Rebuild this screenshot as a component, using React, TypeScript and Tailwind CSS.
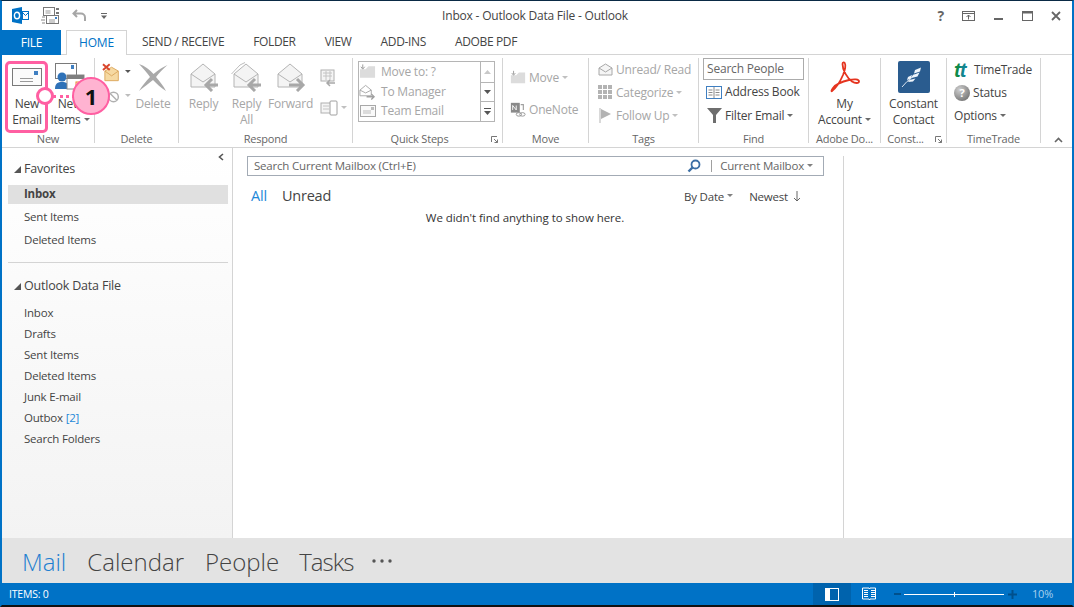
import type { ReactNode } from "react";

const font = { fontFamily: '"Open Sans", "Noto Sans", sans-serif' };

function Caret({ color = "#6a6a6a" }: { color?: string }) {
  return (
    <svg width="6" height="3" viewBox="0 0 6 3" className="inline-block ml-[3px] mb-[2px]">
      <path d="M0 0h6L3 3z" fill={color} />
    </svg>
  );
}

function OpenEnvelope({ dir, double }: { dir: "left" | "right"; double?: boolean }) {
  return (
    <svg width="32" height="30" viewBox="0 0 32 30">
      {double && <path d="M0.500 12 L9 3 L14 0.500" fill="none" stroke="#bdbdbd" />}
      <path d="M3 12 L15 2 L27 12 V25 H3z" fill="#f4f4f4" stroke="#b4b4b4" />
      <path d="M3 12 L15 20 L27 12" fill="none" stroke="#b4b4b4" />
      {dir === "left" ? (
        <path d="M30 23H18M24 17l-6 6 6 6" fill="none" stroke="#a8a8a8" strokeWidth="3" />
      ) : (
        <path d="M14 23h13M22 17l6 6-6 6" fill="none" stroke="#a8a8a8" strokeWidth="3" />
      )}
    </svg>
  );
}

function Group({
  w,
  label,
  launcher,
  children,
}: {
  w: string;
  label: string;
  launcher?: boolean;
  children: ReactNode;
}) {
  return (
    <div className={`${w} h-[85px] flex flex-col shrink-0 border-r border-[#d4d4d4]`}>
      <div className="flex-1 flex min-h-0">{children}</div>
      <div className={`h-[8px] leading-[8px] text-[11px] text-[#666666] text-center relative whitespace-nowrap ${launcher ? "pr-[16px]" : ""}`}>
        {label}
        {launcher && (
          <svg width="7" height="7" viewBox="0 0 7 7" className="absolute right-[4px] top-[1px]">
            <path d="M0.500 6V0.500H6M3 3l3.500 3.500M6.500 3.500v3h-3" fill="none" stroke="#777777" />
          </svg>
        )}
      </div>
    </div>
  );
}

function Large({
  icon,
  lines,
  caret,
  muted,
  w,
}: {
  icon: ReactNode;
  lines: string[];
  caret?: boolean;
  muted?: boolean;
  w: string;
}) {
  return (
    <div className={`${w} flex flex-col items-center shrink-0`}>
      <div className="h-[38px] flex items-center justify-center">{icon}</div>
      {lines.map((l, i) => (
        <div key={l} className={`h-[16px] leading-[16px] text-[12px] whitespace-nowrap ${muted ? "text-[#a6a6a6]" : "text-[#444444]"}`}>
          {l}
          {caret && i === lines.length - 1 && <Caret />}
        </div>
      ))}
    </div>
  );
}

function Row({ icon, text, caret, muted, h = "h-[23px]" }: { icon: ReactNode; text: string; caret?: boolean; muted?: boolean; h?: string }) {
  return (
    <div className={`${h} flex items-center gap-[3px] text-[12px] whitespace-nowrap ${muted ? "text-[#a6a6a6]" : "text-[#444444]"}`}>
      <div className="w-[16px] flex items-center justify-center shrink-0">{icon}</div>
      <span>
        {text}
        {caret && <Caret color={muted ? "#c0c0c0" : "#6a6a6a"} />}
      </span>
    </div>
  );
}

function QuickRow({ icon, text }: { icon: ReactNode; text: string }) {
  return (
    <div className="h-[20px] flex items-center gap-[5px] text-[12px] text-[#a6a6a6] whitespace-nowrap">
      <div className="w-[17px] flex justify-center shrink-0">{icon}</div>
      {text}
    </div>
  );
}

function FolderMove() {
  return (
    <svg width="18" height="15" viewBox="0 0 18 15">
      <path d="M1 5h6l3-3h7v12H1z" fill="#dcdcdc" />
      <path d="M4 0v4M2 2.500L4 5l2-2.500" fill="none" stroke="#999999" />
    </svg>
  );
}

function Ribbon() {
  return (
    <div className="h-[93px] shrink-0 bg-white border-b border-[#d4d4d4] flex pt-[3px]">
      <Group w="w-[93px]" label="New">
        <div className="flex pl-[3px]">
          <Large
            w="w-[44px]"
            lines={["New", "Email"]}
            icon={
              <svg width="30" height="18" viewBox="0 0 30 18">
                <rect x="0.500" y="0.500" width="29" height="17" fill="#fbfbfb" stroke="#7a7a7a" />
                <rect x="22" y="3" width="4" height="4" fill="#3f7fc1" />
                <path d="M8 10.500h13M8 13.500h13" stroke="#9a9a9a" />
              </svg>
            }
          />
          <Large
            w="w-[42px]"
            lines={["New", "Items"]}
            caret
            icon={
              <svg width="32" height="30" viewBox="0 0 32 30">
                <rect x="1.500" y="1.500" width="21" height="15" fill="#fff" stroke="#7a7a7a" />
                <rect x="17" y="3" width="3" height="4" fill="#3f7fc1" />
                <circle cx="8" cy="15" r="4.500" fill="#2f72b8" />
                <path d="M1 27c0-6 3-7 7-7s7 1 7 7z" fill="#2f72b8" />
                <rect x="13" y="13" width="17" height="14" fill="#fff" stroke="#8a8a8a" />
                <rect x="13" y="13" width="17" height="4" fill="#7f7f7f" />
                <rect x="22" y="20" width="5" height="5" fill="none" stroke="#e8862a" />
              </svg>
            }
          />
        </div>
      </Group>
      <Group w="w-[84px]" label="Delete">
        <div className="w-[36px] pl-[7px] flex flex-col pt-[2px] shrink-0">
          <div className="h-[24px] flex items-center gap-[2px]">
            <svg width="19" height="19" viewBox="0 0 19 19">
              <path d="M3 8l7-4 7 4v10H3z" fill="#f6d9a2" stroke="#dba85f" />
              <path d="M3 8l7 5 7-5" fill="none" stroke="#dba85f" />
              <path d="M1 1l7 6M8 1L1 7" stroke="#d9452c" strokeWidth="2" />
            </svg>
            <Caret color="#555555" />
          </div>
          <div className="h-[24px] flex items-center gap-[2px]">
            <svg width="19" height="18" viewBox="0 0 19 18">
              <circle cx="4" cy="8" r="4" fill="#bdbdbd" />
              <circle cx="12" cy="10" r="5" fill="none" stroke="#b0b0b0" strokeWidth="1.500" />
              <path d="M8.500 6.500l7 7" stroke="#b0b0b0" strokeWidth="1.500" />
            </svg>
            <Caret color="#bdbdbd" />
          </div>
        </div>
        <Large
          w="w-[44px]"
          lines={["Delete"]}
          muted
          icon={
            <svg width="30" height="29" viewBox="0 0 30 29">
              <path d="M1 1C7 3 12 7 15.500 11 20 7 25 4 29.500 2 25 6 21 10 18 14c3.500 4 7.500 9 10 14-5-3-9.500-7.500-13-11-4 3-9 7-14 11 3-5 7-10 11-14C9 10 5 5 1 1z" fill="#a9a9a9" />
            </svg>
          }
        />
      </Group>
      <Group w="w-[174px]" label="Respond">
        <div className="flex pl-[3px]">
          <Large w="w-[43px]" lines={["Reply"]} muted icon={<OpenEnvelope dir="left" />} />
          <Large w="w-[43px]" lines={["Reply", "All"]} muted icon={<OpenEnvelope dir="left" double />} />
          <Large w="w-[45px]" lines={["Forward"]} muted icon={<OpenEnvelope dir="right" />} />
          <div className="flex flex-col pl-[7px] pt-[11px] gap-[13px]">
            <svg width="16" height="18" viewBox="0 0 16 18">
              <rect x="1" y="1" width="13" height="11" fill="#f5f5f5" stroke="#b0b0b0" />
              <path d="M3 4h9M3 7h9M6 2v9M10 2v9" stroke="#c4c4c4" />
              <path d="M15 14H7M10 11l-3 3 3 3" fill="none" stroke="#a8a8a8" strokeWidth="1.500" />
            </svg>
            <div className="flex items-center">
              <svg width="18" height="16" viewBox="0 0 18 16">
                <rect x="1" y="3" width="10" height="10" fill="#f5f5f5" stroke="#b0b0b0" />
                <path d="M3 6h6M3 9h6" stroke="#c4c4c4" />
                <rect x="10" y="1" width="7" height="14" rx="1" fill="#fff" stroke="#a0a0a0" />
              </svg>
              <Caret color="#c0c0c0" />
            </div>
          </div>
        </div>
      </Group>
      <Group w="w-[150px]" label="Quick Steps" launcher>
        <div className="pl-[5px] pt-[3px]">
          <div className="w-[137px] h-[61px] border border-[#b5b5b5] flex">
            <div className="flex-1 flex flex-col">
              <QuickRow icon={<FolderMove />} text="Move to: ?" />
              <QuickRow
                icon={
                  <svg width="18" height="16" viewBox="0 0 18 16">
                    <path d="M1 6l6-5 6 5v6H1z" fill="none" stroke="#a8a8a8" />
                    <path d="M1 6l6 3 6-3" fill="none" stroke="#a8a8a8" />
                    <path d="M8 13h8M13 10l3 3-3 3" fill="none" stroke="#a0a0a0" strokeWidth="1.400" />
                  </svg>
                }
                text="To Manager"
              />
              <QuickRow
                icon={
                  <svg width="16" height="12" viewBox="0 0 16 12">
                    <rect x="0.500" y="0.500" width="15" height="11" fill="#fafafa" stroke="#a8a8a8" />
                    <rect x="11" y="2" width="3" height="3" fill="#bdbdbd" />
                    <path d="M3 6h8M3 8h8" stroke="#bdbdbd" />
                  </svg>
                }
                text="Team Email"
              />
            </div>
            <div className="w-[14px] border-l border-[#b5b5b5] flex flex-col items-center">
              <div className="h-[21px] w-full flex items-center justify-center border-b border-[#b5b5b5]">
                <svg width="7" height="4" viewBox="0 0 7 4"><path d="M0 4h7L3.500 0z" fill="#c8c8c8" /></svg>
              </div>
              <div className="h-[19px] w-full flex items-center justify-center border-b border-[#b5b5b5]">
                <svg width="7" height="4" viewBox="0 0 7 4"><path d="M0 0h7L3.500 4z" fill="#555555" /></svg>
              </div>
              <div className="flex-1 flex flex-col items-center justify-center gap-[2px]">
                <div className="w-[7px] h-[1px] bg-[#555555]" />
                <svg width="7" height="4" viewBox="0 0 7 4"><path d="M0 0h7L3.500 4z" fill="#555555" /></svg>
              </div>
            </div>
          </div>
        </div>
      </Group>
      <Group w="w-[86px]" label="Move">
        <div className="pl-[7px] flex flex-col pt-[8px] gap-[9px]">
          <Row muted caret text="Move" icon={<FolderMove />} />
          <Row
            muted
            text="OneNote"
            icon={
              <svg width="18" height="17" viewBox="0 0 18 17">
                <rect x="1" y="1" width="10" height="11" fill="#8a8a8a" />
                <path d="M3 9V4l4 5V4" fill="none" stroke="#fff" />
                <path d="M12 3h3v6" fill="none" stroke="#a0a0a0" strokeWidth="1.300" />
                <ellipse cx="10" cy="14" rx="3" ry="2" fill="none" stroke="#909090" />
                <ellipse cx="14" cy="14" rx="3" ry="2" fill="none" stroke="#909090" />
              </svg>
            }
          />
        </div>
      </Group>
      <Group w="w-[110px]" label="Tags">
        <div className="pl-[8px] flex flex-col">
          <Row
            muted
            text="Unread/ Read"
            icon={
              <svg width="15" height="13" viewBox="0 0 15 13">
                <path d="M1 5l6.500-4L14 5v7H1z" fill="#f5f5f5" stroke="#a8a8a8" />
                <path d="M1 5l6.500 4L14 5" fill="none" stroke="#a8a8a8" />
              </svg>
            }
          />
          <Row
            muted
            caret
            text="Categorize"
            icon={
              <svg width="15" height="15" viewBox="0 0 15 15" fill="#b3b3b3">
                <rect width="4" height="4" /><rect x="5" width="4" height="4" /><rect x="10" width="4" height="4" />
                <rect y="5" width="4" height="4" /><rect x="5" y="5" width="4" height="4" /><rect x="10" y="5" width="4" height="4" />
                <rect y="10" width="4" height="4" /><rect x="5" y="10" width="4" height="4" /><rect x="10" y="10" width="4" height="4" />
              </svg>
            }
          />
          <Row
            muted
            caret
            text="Follow Up"
            icon={
              <svg width="13" height="15" viewBox="0 0 13 15">
                <path d="M1 0v15" stroke="#b3b3b3" />
                <path d="M2 1l10 5-10 5z" fill="#b3b3b3" />
              </svg>
            }
          />
        </div>
      </Group>
      <Group w="w-[110px]" label="Find">
        <div className="pl-[4px] flex flex-col">
          <div className="w-[101px] h-[22px] border border-[#ababab] text-[12px] text-[#666666] leading-[20px] pl-[3px] whitespace-nowrap">
            Search People
          </div>
          <div className="pl-[3px]">
            <Row
              h="h-[24px]"
              text="Address Book"
              icon={
                <svg width="16" height="13" viewBox="0 0 16 13">
                  <rect x="0.500" y="0.500" width="15" height="12" fill="#fff" stroke="#3f7fc1" />
                  <path d="M8 1v11M2.500 4h4M2.500 6.500h4M2.500 9h4M9.500 4h4M9.500 6.500h4M9.500 9h4" stroke="#8a8a8a" />
                </svg>
              }
            />
            <Row
              text="Filter Email"
              caret
              icon={
                <svg width="15" height="15" viewBox="0 0 15 15">
                  <path d="M0 0h15L9 7v8H6V7z" fill="#6e6e6e" />
                </svg>
              }
            />
          </div>
        </div>
      </Group>
      <Group w="w-[72px]" label="Adobe Do...">
        <Large
          w="w-full"
          lines={["My", "Account"]}
          caret
          icon={
            <svg width="30" height="32" viewBox="0 0 30 32">
              <path
                d="M2 30C6 27 10 21 13 14 15 9 16 5 15 2.500 14.500 1 12.500 1 12.500 3 12.500 9 17 17 22 20.500 25 22.500 29 22.500 29 20.500 29 18 24 18 19 19 12 20.500 6 23 3 27 1.500 29 1 31 2 30z"
                fill="none"
                stroke="#e5341f"
                strokeWidth="1.800"
              />
            </svg>
          }
        />
      </Group>
      <Group w="w-[66px]" label="Const..." launcher>
        <Large
          w="w-full"
          lines={["Constant", "Contact"]}
          icon={
            <svg width="32" height="32" viewBox="0 0 32 32">
              <rect width="32" height="32" rx="2" fill="#2a5c8f" />
              <path d="M17 9l6-2.500-1 4-6 2zM15 14l6.500-2.500-2 4-6 1.500zM10 16l4-2-1 3.500-4 1.500zM11.500 19l6-1.500-2.500 3-5 .5z" fill="#eef4fa" />
              <path d="M4 26l5-5.500 4-3 3-4" fill="none" stroke="#eef4fa" strokeWidth="0.900" />
            </svg>
          }
        />
      </Group>
      <Group w="w-[94px]" label="TimeTrade">
        <div className="pl-[7px] flex flex-col">
          <div className="h-[23px] flex items-center gap-[3px] text-[12px] text-[#444444] whitespace-nowrap">
            <span className="w-[17px] text-[20px] leading-[20px] font-bold italic tracking-[-1px]" style={{ fontFamily: '"Liberation Sans", sans-serif' }}>
              <span className="text-[#0f8a4a]">t</span>
              <span className="text-[#12868f]">t</span>
            </span>
            TimeTrade
          </div>
          <div className="h-[23px] flex items-center gap-[3px] text-[12px] text-[#444444] whitespace-nowrap">
            <div className="w-[16px] h-[16px] rounded-full bg-[radial-gradient(circle_at_35%_30%,#cfcfcf,#5f5f5f)] text-white text-[11px] font-bold leading-[16px] text-center">?</div>
            Status
          </div>
          <div className="h-[24px] flex items-center text-[12px] text-[#444444] whitespace-nowrap">
            Options
            <Caret />
          </div>
        </div>
      </Group>
      <div className="flex-1 h-[85px] flex items-end justify-end pr-[9px]">
        <svg width="9" height="6" viewBox="0 0 9 6">
          <path d="M1 5l3.500-3.500L8 5" fill="none" stroke="#666666" strokeWidth="1.600" />
        </svg>
      </div>
    </div>
  );
}

function NavItem({ children }: { children: ReactNode }) {
  return <div className="h-[21px] leading-[21px] pl-[16px] text-[11.5px] text-[#444444] whitespace-nowrap">{children}</div>;
}

function FavItem({ children }: { children: ReactNode }) {
  return <div className="h-[23px] leading-[23px] pl-[16px] text-[11.5px] text-[#444444] whitespace-nowrap">{children}</div>;
}

function Triangle() {
  return (
    <svg width="7" height="7" viewBox="0 0 7 7">
      <path d="M7 0v7H0z" fill="#555555" />
    </svg>
  );
}

function Sidebar() {
  return (
    <div className="w-[231px] shrink-0 relative bg-gradient-to-b from-white to-[#f3f3f3] border-r border-[#d4d4d4] pl-[6px] pr-[4px]">
      <svg width="6" height="8" viewBox="0 0 6 8" className="absolute right-[8px] top-[5px]">
        <path d="M5 1L1.500 4 5 7" fill="none" stroke="#555555" strokeWidth="1.600" />
      </svg>
      <div className="h-[37px] flex items-center gap-[3px] pl-[6px] pt-[5px] text-[12.5px] text-[#444444]">
        <Triangle />
        Favorites
      </div>
      <div className="h-[19px] leading-[18px] mb-[1px] pl-[16px] bg-[#e0e0e0] font-bold text-[11.5px] text-[#444444]">Inbox</div>
      <FavItem>Sent Items</FavItem>
      <FavItem>Deleted Items</FavItem>
      <div className="h-[1px] bg-[#d4d4d4] mt-[11px]" />
      <div className="h-[39px] flex items-center gap-[3px] pl-[6px] pt-[8px] text-[12.5px] text-[#444444]">
        <Triangle />
        Outlook Data File
      </div>
      <NavItem>Inbox</NavItem>
      <NavItem>Drafts</NavItem>
      <NavItem>Sent Items</NavItem>
      <NavItem>Deleted Items</NavItem>
      <NavItem>Junk E-mail</NavItem>
      <NavItem>
        Outbox <span className="text-[#1e88d8]">[2]</span>
      </NavItem>
      <NavItem>Search Folders</NavItem>
    </div>
  );
}

function MailList() {
  return (
    <div className="w-[611px] shrink-0 border-r border-[#d4d4d4] mt-[8px] pl-[14px] pr-[19px]">
      <div className="h-[20px] border border-[#a3abb5] flex items-center pl-[6px] pr-[6px] text-[11.5px] text-[#666666] whitespace-nowrap">
        <span className="flex-1">Search Current Mailbox (Ctrl+E)</span>
        <svg width="14" height="14" viewBox="0 0 14 14">
          <circle cx="8.500" cy="5.500" r="4" fill="none" stroke="#3d6fa5" strokeWidth="1.800" />
          <path d="M5.500 8.500L1.500 12.500" stroke="#3d6fa5" strokeWidth="2.400" />
        </svg>
        <div className="w-[1px] h-[12px] bg-[#a0a0a0] ml-[10px] mr-[8px]" />
        <span>Current Mailbox</span>
        <Caret color="#808080" />
        <span className="w-[1px] ml-[3px]" />
      </div>
      <div className="h-[29px] mt-[5px] flex items-center text-[#444444] pl-[4px]">
        <span className="text-[14.5px] text-[#1e88d8]">All</span>
        <span className="text-[14.5px] ml-[15px]">Unread</span>
        <span className="ml-auto text-[11.5px] flex items-center whitespace-nowrap pr-[23px] pt-[2px]">
          By Date
          <Caret color="#808080" />
          <span className="ml-[16px]">Newest</span>
          <svg width="8" height="11" viewBox="0 0 8 11" className="ml-[5px]">
            <path d="M4 0v10M1 7l3 3 3-3" fill="none" stroke="#666666" />
          </svg>
        </span>
      </div>
      <div className="text-center text-[11.5px] text-[#333333] leading-[16px] pr-[21px] tracking-[-0.05px]">We didn't find anything to show here.</div>
    </div>
  );
}

function StatusBar() {
  return (
    <div className="h-[22px] shrink-0 bg-[#0072c6] flex items-center text-white text-[10.5px] pl-[7px]">
      <span className="flex-1 font-medium pt-[1px]">ITEMS: 0</span>
      <div className="w-[38px] h-full bg-[#0063ad] flex items-center justify-center">
        <svg width="14" height="13" viewBox="0 0 14 13">
          <rect x="0.500" y="0.500" width="13" height="12" fill="none" stroke="#fff" />
          <rect x="0" y="0" width="5" height="13" fill="#fff" />
        </svg>
      </div>
      <div className="w-[36px] h-full flex items-center justify-center">
        <svg width="14" height="14" viewBox="0 0 14 14">
          <path d="M0.500 1h6.500l.5 1 .5-1h5.500v11H8l-.5 1-.5-1H.500z" fill="none" stroke="#fff" />
          <path d="M2 3.500h4M2 5.500h4M2 7.500h4M2 9.500h4M9 3.500h4M9 5.500h4M9 7.500h4M9 9.500h4" stroke="#fff" />
        </svg>
      </div>
      <div className="w-[7px] h-[2px] bg-[#00508c] ml-[7px]" />
      <div className="w-[100px] h-[1px] bg-white ml-[3px] relative">
        <div className="absolute left-[50px] top-[-2px] w-[1px] h-[5px] bg-white" />
      </div>
      <svg width="9" height="9" viewBox="0 0 9 9" className="ml-[4px]">
        <path d="M0 4.500h9M4.500 0v9" stroke="#00508c" strokeWidth="2" />
      </svg>
      <span className="text-[#a9d1ee] ml-[15px] w-[40px] text-[11px]">10%</span>
    </div>
  );
}

export default function App() {
  return (
    <div
      className="w-[1074px] h-[607px] overflow-hidden relative flex flex-col bg-white tracking-[-0.2px] border-t border-t-[#0a2a45] border-x-2 border-x-[#0072c6] border-b-2 border-b-[#111111]"
      style={font}
    >
      {/* title bar */}
      <div className="h-[29px] shrink-0 flex items-center">
        <div className="w-[190px] flex items-center pl-[10px] gap-[12px] shrink-0">
          <svg width="17" height="17" viewBox="0 0 17 17">
            <path d="M0 2l10-2v17L0 15z" fill="#0072c6" />
            <ellipse cx="5" cy="8.500" rx="2.600" ry="3.300" fill="none" stroke="#fff" strokeWidth="1.400" />
            <rect x="10.500" y="4.500" width="6" height="8" fill="#fff" stroke="#0072c6" />
            <path d="M10.500 5.500l3 3 3-3" fill="none" stroke="#0072c6" />
          </svg>
          <svg width="18" height="18" viewBox="0 0 18 18">
            <rect x="2.500" y="0.500" width="11" height="8" fill="#fff" stroke="#777777" />
            <path d="M4.500 4h5M4.500 6h5" stroke="#999999" />
            <rect x="15" y="1" width="3" height="2" fill="#777777" />
            <rect x="15" y="5" width="3" height="2" fill="#777777" />
            <rect x="5.500" y="8.500" width="12" height="8" fill="#fff" stroke="#777777" />
            <rect x="14" y="10" width="2" height="2" fill="#3f7fc1" />
            <path d="M8 13h6M8 15h6" stroke="#999999" />
            <path d="M1 10h3M0 13h4M1 16h3" stroke="#888888" />
          </svg>
          <svg width="15" height="13" viewBox="0 0 15 13" className="ml-[1px]">
            <path d="M5 1L1.500 4.500 5 8M2 4.500h7a4 4 0 0 1 4 4V12" fill="none" stroke="#a6a6a6" strokeWidth="2" />
          </svg>
          <svg width="6" height="6" viewBox="0 0 6 6" className="ml-[2px]">
            <path d="M0 0h6v1H0zM0 2.500h6L3 6z" fill="#666666" />
          </svg>
        </div>
        <div className="flex-1 text-center text-[12px] text-[#444444] whitespace-nowrap pr-[4px]">Inbox - Outlook Data File - Outlook</div>
        <div className="w-[190px] flex items-center justify-end shrink-0 pr-[11px] gap-[18px]">
          <span className="text-[14px] font-bold text-[#666666] leading-none">?</span>
          <svg width="13" height="10" viewBox="0 0 13 10">
            <rect x="0.500" y="0.500" width="12" height="9" fill="none" stroke="#666666" />
            <path d="M0 2.500h13" stroke="#666666" />
            <path d="M6.500 8.500V4M4.500 6l2-2 2 2" fill="none" stroke="#666666" />
          </svg>
          <div className="w-[9px] h-[2px] bg-[#666666] mt-[6px] ml-[1px]" />
          <svg width="11" height="10" viewBox="0 0 11 10" className="ml-[1px]">
            <rect x="0.500" y="0.500" width="10" height="9" fill="none" stroke="#666666" />
            <path d="M0 1.500h11" stroke="#666666" strokeWidth="2" />
          </svg>
          <svg width="10" height="10" viewBox="0 0 10 10">
            <path d="M1 1l8 8M9 1l-8 8" stroke="#666666" strokeWidth="1.800" />
          </svg>
        </div>
      </div>

      {/* tabs */}
      <div className="h-[25px] shrink-0 flex items-end text-[12px] text-[#444444] border-b border-[#d4d4d4]">
        <div className="w-[59px] h-[25px] mb-[-1px] bg-[#0072c6] text-white flex items-center justify-center">FILE</div>
        <div className="ml-[5px] w-[61px] h-[25px] mb-[-1px] bg-white border-x border-t border-[#d4d4d4] text-[#0072c6] flex items-center justify-center">HOME</div>
        <div className="h-[24px] leading-[24px] ml-[15px] flex gap-[29px] whitespace-nowrap tracking-[-0.35px]">
          <span>SEND / RECEIVE</span>
          <span>FOLDER</span>
          <span>VIEW</span>
          <span>ADD-INS</span>
          <span>ADOBE PDF</span>
        </div>
      </div>

      <Ribbon />

      <div className="flex-1 min-h-0 flex">
        <Sidebar />
        <MailList />
        <div className="flex-1" />
      </div>

      {/* bottom nav */}
      <div className="h-[45px] shrink-0 bg-[#e3e3e3] flex items-center pl-[20px] pt-[3px] text-[24px] font-light tracking-normal text-[#444444] gap-[21px] whitespace-nowrap">
        <span className="text-[#1e7fd0]">Mail</span>
        <span>Calendar</span>
        <span className="mr-[-1px]">People</span>
        <span className="tracking-[-1px]">Tasks</span>
        <svg width="20" height="4" viewBox="0 0 20 4" className="mb-[3px] ml-[-3px]">
          <circle cx="2" cy="2" r="1.700" fill="#555555" />
          <circle cx="10" cy="2" r="1.700" fill="#555555" />
          <circle cx="18" cy="2" r="1.700" fill="#555555" />
        </svg>
      </div>

      <StatusBar />

      {/* callout marker over the ribbon */}
      <div className="absolute left-[3px] top-[60px] w-[43px] h-[72px] rounded-[5px] border-[3px] border-[#ff5fa2]" />
      <div className="absolute left-[51px] top-[94px] w-[22px] border-t-[3px] border-dotted border-[#ff5fa2]" />
      <div className="absolute left-[34px] top-[86px] w-[18px] h-[18px] rounded-full bg-white border-[3px] border-[#ff5fa2]" />
      <div className="absolute left-[70px] top-[76px] w-[38px] h-[38px] rounded-full bg-[#ffb3d1] border-[2px] border-[#ff5fa2] flex items-center justify-center text-[22px] font-bold text-[#111111]">
        1
      </div>
    </div>
  );
}
